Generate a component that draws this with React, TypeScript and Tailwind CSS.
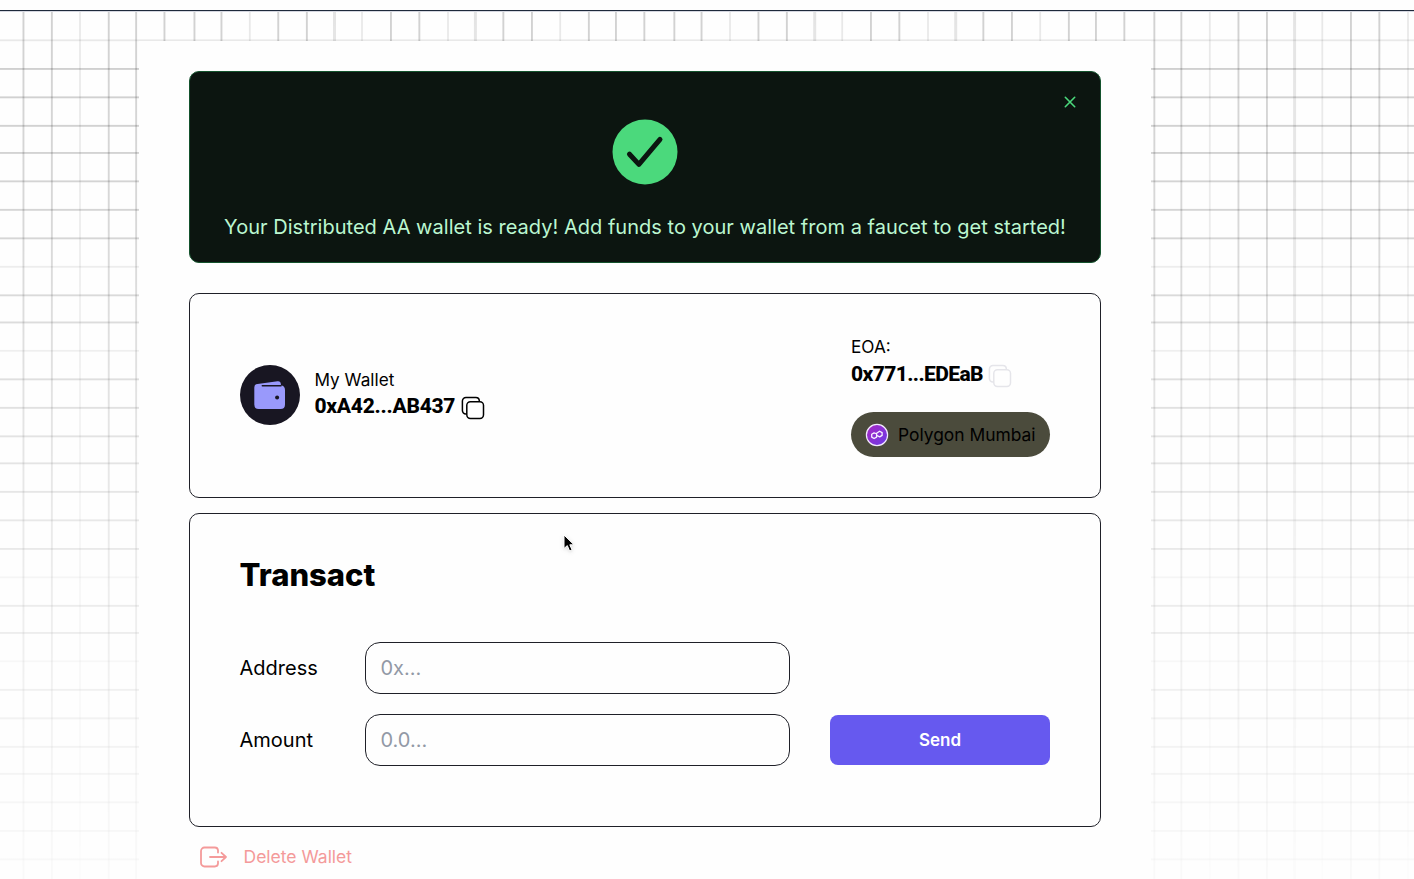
const XS = [23.3, 51.7, 108.6, 136, 164.3, 194.3, 221.3, 278.1, 306.7, 390.8, 419.2, 503.2, 531.8, 588.7, 615.8, 644.2, 674.2, 701.4, 758.3, 786.7, 870.8, 899.2, 983.2, 1011.8, 1068.7, 1095.8, 1124.2, 1154.2, 1181.2, 1238.3, 1266.8, 1350.8, 1379.2];
const FAINT_XS = [80, 249.8, 362, 448, 560.2, 730, 842.2, 928, 1040.2, 1209.8, 1322.3, 1408];
const WIDE_XS = [334.5, 475.4, 814.7, 955.7, 1294.6];
const YS = [68.8, 97.2, 125.7, 152.8, 181.2, 209.7, 238.2, 295.2, 322.3, 379.2, 407.7, 436.2, 463.2, 491.7, 520.2, 548.8, 605.7, 632.8, 689.7, 718.2, 746.7, 773.7, 802.2, 830.8, 859.2];
const FAINT_YS = [40.3, 266.8, 350.8, 577.3, 661.3];

function Grid() {
  return (
    <svg className="absolute inset-0 -z-10 h-full w-full" viewBox="0 0 1414 879">
      <defs>
        <linearGradient id="fade" x1="0" y1="0" x2="0" y2="1">
          <stop offset="0" stopColor="#fff" />
          <stop offset="0.25" stopColor="#fff" stopOpacity="0.85" />
          <stop offset="0.6" stopColor="#fff" stopOpacity="0.45" />
          <stop offset="1" stopColor="#fff" stopOpacity="0.1" />
        </linearGradient>
        <mask id="gridMask" maskUnits="userSpaceOnUse" x="0" y="0" width="1414" height="879">
          <rect width="1414" height="879" fill="url(#fade)" />
        </mask>
      </defs>
      <g mask="url(#gridMask)" fill="#000">
        {XS.map((x) => (
          <rect key={x} x={x - 0.8} y="12" width="1.9" height="867" fillOpacity="0.175" />
        ))}
        {FAINT_XS.map((x) => (
          <rect key={x} x={x - 0.9} y="12" width="1.8" height="867" fillOpacity="0.085" />
        ))}
        {WIDE_XS.map((x) => (
          <rect key={x} x={x - 1.5} y="12" width="3" height="867" fillOpacity="0.1" />
        ))}
        {YS.map((y) => (
          <rect key={y} x="0" y={y - 0.8} width="1414" height="1.9" fillOpacity="0.19" />
        ))}
        {FAINT_YS.map((y) => (
          <rect key={y} x="0" y={y - 0.9} width="1414" height="1.8" fillOpacity="0.085" />
        ))}
      </g>
    </svg>
  );
}

function CopyIcon({ className }: { className: string }) {
  return (
    <svg className={className} width="24" height="24" viewBox="0 0 24 24" fill="none" stroke="currentColor" strokeWidth="1.5">
      <rect x="5.8" y="5.7" width="16.7" height="16.7" rx="3.6" />
      <path d="M18.3 5.5V4.8A3.4 3.4 0 0 0 14.9 1.5H5A3.6 3.6 0 0 0 1.4 5.1V14.6A3.4 3.4 0 0 0 4.8 18H5.5" />
    </svg>
  );
}

export default function App() {
  return (
    <div className="relative isolate h-[879px] w-full overflow-hidden bg-[#fefefe] font-['Inter',sans-serif] text-black">
      <Grid />
      <div className="h-3 border-b border-[#d5d7e0] bg-[#fefefe] pt-[10px]">
        <div className="h-px bg-[#1e293b]" />
      </div>
      <main className="ml-[139px] mt-[29px] h-[838px] w-[1012px] bg-[#fefefe] px-[50px] pt-[30px]">
        <section className="relative flex h-48 flex-col items-center rounded-[10px] border border-[#14532d] bg-[#0c1510] pt-[47px]">
          <button className="absolute right-[24px] top-[24px]" aria-label="Close">
            <svg width="12" height="12" viewBox="0 0 12 12" stroke="#4bd97c" strokeWidth="1.6" strokeLinecap="round">
              <path d="M1.3 1.3 10.7 10.7M10.7 1.3 1.3 10.7" />
            </svg>
          </button>
          <svg width="66" height="66" viewBox="0 0 66 66" fill="none">
            <circle cx="33" cy="33" r="32.5" fill="#4bd97c" />
            <path d="M17.5 35.2 26.9 45.4 48 20.4" stroke="#0c1510" strokeWidth="5" strokeLinecap="round" strokeLinejoin="round" />
          </svg>
          <p className="mt-[27px] whitespace-nowrap text-[20px] leading-[30px] tracking-[0.025px] text-[#bbf7d0]">
            Your Distributed AA wallet is ready! Add funds to your wallet from a faucet to get started!
          </p>
        </section>

        <section className="mt-[30px] flex h-[205px] items-center justify-between rounded-[10px] border border-[#1f2028] px-[50px]">
          <div className="mb-[2px] flex items-center gap-[14.5px]">
            <svg width="60" height="60" viewBox="0 0 60 60">
              <circle cx="30" cy="30" r="30" fill="#181622" />
              <path d="M14.3 22.5Q14.3 19.2 17.5 18.9L37.5 16.3Q40.7 16 40.9 19.2L40.9 20.2Q45 20.8 45 25V39.5Q45 44 40.5 44H18.7Q14.3 44 14.3 39.5Z" fill="#9999fb" />
              <path d="M22.3 20.7H41" stroke="#181622" strokeWidth="1.5" strokeLinecap="round" />
              <circle cx="37.1" cy="32.6" r="2" fill="#181622" />
            </svg>
            <div className="pb-[3px]">
              <p className="text-[17.2px] leading-[25px]">My Wallet</p>
              <div className="flex items-center gap-[5px]">
                <span className="w-[141px] whitespace-nowrap pt-px font-['Roboto',sans-serif] text-[21px] font-extrabold leading-[27px] tracking-[-0.25px]">0xA42...AB437</span>
                <CopyIcon className="relative top-[2px]" />
              </div>
            </div>
          </div>
          <div className="mb-px w-[199px]">
            <p className="text-[17.2px] leading-[27px]">EOA:</p>
            <div className="flex items-center gap-[5px]">
              <span className="relative top-px w-[132px] whitespace-nowrap font-['Roboto',sans-serif] text-[21px] font-extrabold leading-[27px] tracking-[-0.6px]">0x771...EDEaB</span>
              <CopyIcon className="relative top-[2px] text-[#e5e5ea]" />
            </div>
            <div className="mt-[25px] flex h-[45px] items-center gap-[9px] rounded-full bg-[#4b4b3c] pl-[14px]">
              <svg width="24" height="24" viewBox="0 0 24 24" fill="none">
                <defs>
                  <linearGradient id="poly" x1="0" y1="0" x2="1" y2="1">
                    <stop stopColor="#a726c1" />
                    <stop offset="1" stopColor="#6b3be8" />
                  </linearGradient>
                </defs>
                <circle cx="12" cy="12" r="10.6" fill="url(#poly)" stroke="#f3e8ff" strokeWidth="1.2" />
                <path d="M12 11 9.1 9.9 6.7 11.3V14.1L9.1 15.5 11.6 14.1V10.3L14.6 8.2 17.1 9.6V12.4L14.7 13.9 12 12.5" stroke="#f7efff" strokeWidth="1.3" strokeLinejoin="round" />
              </svg>
              <span className="whitespace-nowrap text-[17.4px] leading-6">Polygon Mumbai</span>
            </div>
          </div>
        </section>

        <section className="mt-[15px] h-[314px] rounded-[10px] border border-[#1f2028] px-[49.5px] pt-[41px]">
          <h1 className="text-[31px] font-extrabold leading-[40px]">Transact</h1>
          <div className="mt-[47px] flex items-center">
            <label className="w-[125.5px] text-[20px]" htmlFor="address">Address</label>
            <input id="address" className="h-[52px] w-[425px] rounded-[15px] border border-[#1f2028] bg-transparent px-[14.5px] text-[20px] placeholder:text-[#9299a6]" placeholder="0x..." />
          </div>
          <div className="mt-5 flex items-center">
            <label className="w-[125.5px] text-[20px]" htmlFor="amount">Amount</label>
            <input id="amount" className="h-[52px] w-[425px] rounded-[15px] border border-[#1f2028] bg-transparent px-[14.5px] text-[20px] placeholder:text-[#9299a6]" placeholder="0.0..." />
            <button className="ml-10 h-[50px] w-[220px] rounded-[8px] bg-[#6659ef] pt-[2px] text-[17px] font-semibold text-white">Send</button>
          </div>
        </section>

        <button className="ml-[10px] mt-[18px] flex items-center gap-[15.5px] text-[#f49a9a]">
          <svg width="29" height="24" viewBox="0 0 29 24" fill="none" stroke="currentColor" strokeWidth="1.8" strokeLinecap="round" strokeLinejoin="round">
            <path d="M19 7.5V5.2A3.2 3.2 0 0 0 15.8 2.5H5.5A3.5 3.5 0 0 0 2 6V18A3.5 3.5 0 0 0 5.5 21.5H15.8A3.2 3.2 0 0 0 19 18.5V16.5M11 12H27M22.5 7.8 27 12 22.5 16.2" />
          </svg>
          <span className="text-[17.5px] leading-6">Delete Wallet</span>
        </button>
      </main>
      <svg className="absolute left-[562px] top-[533px] drop-shadow" width="15" height="22" viewBox="0 0 15 22">
        <path d="M2 2V15.5L5.3 12.6 7.6 18 10.1 17 7.8 11.8H12Z" fill="#000" stroke="#fff" strokeWidth="1" />
      </svg>
    </div>
  );
}
